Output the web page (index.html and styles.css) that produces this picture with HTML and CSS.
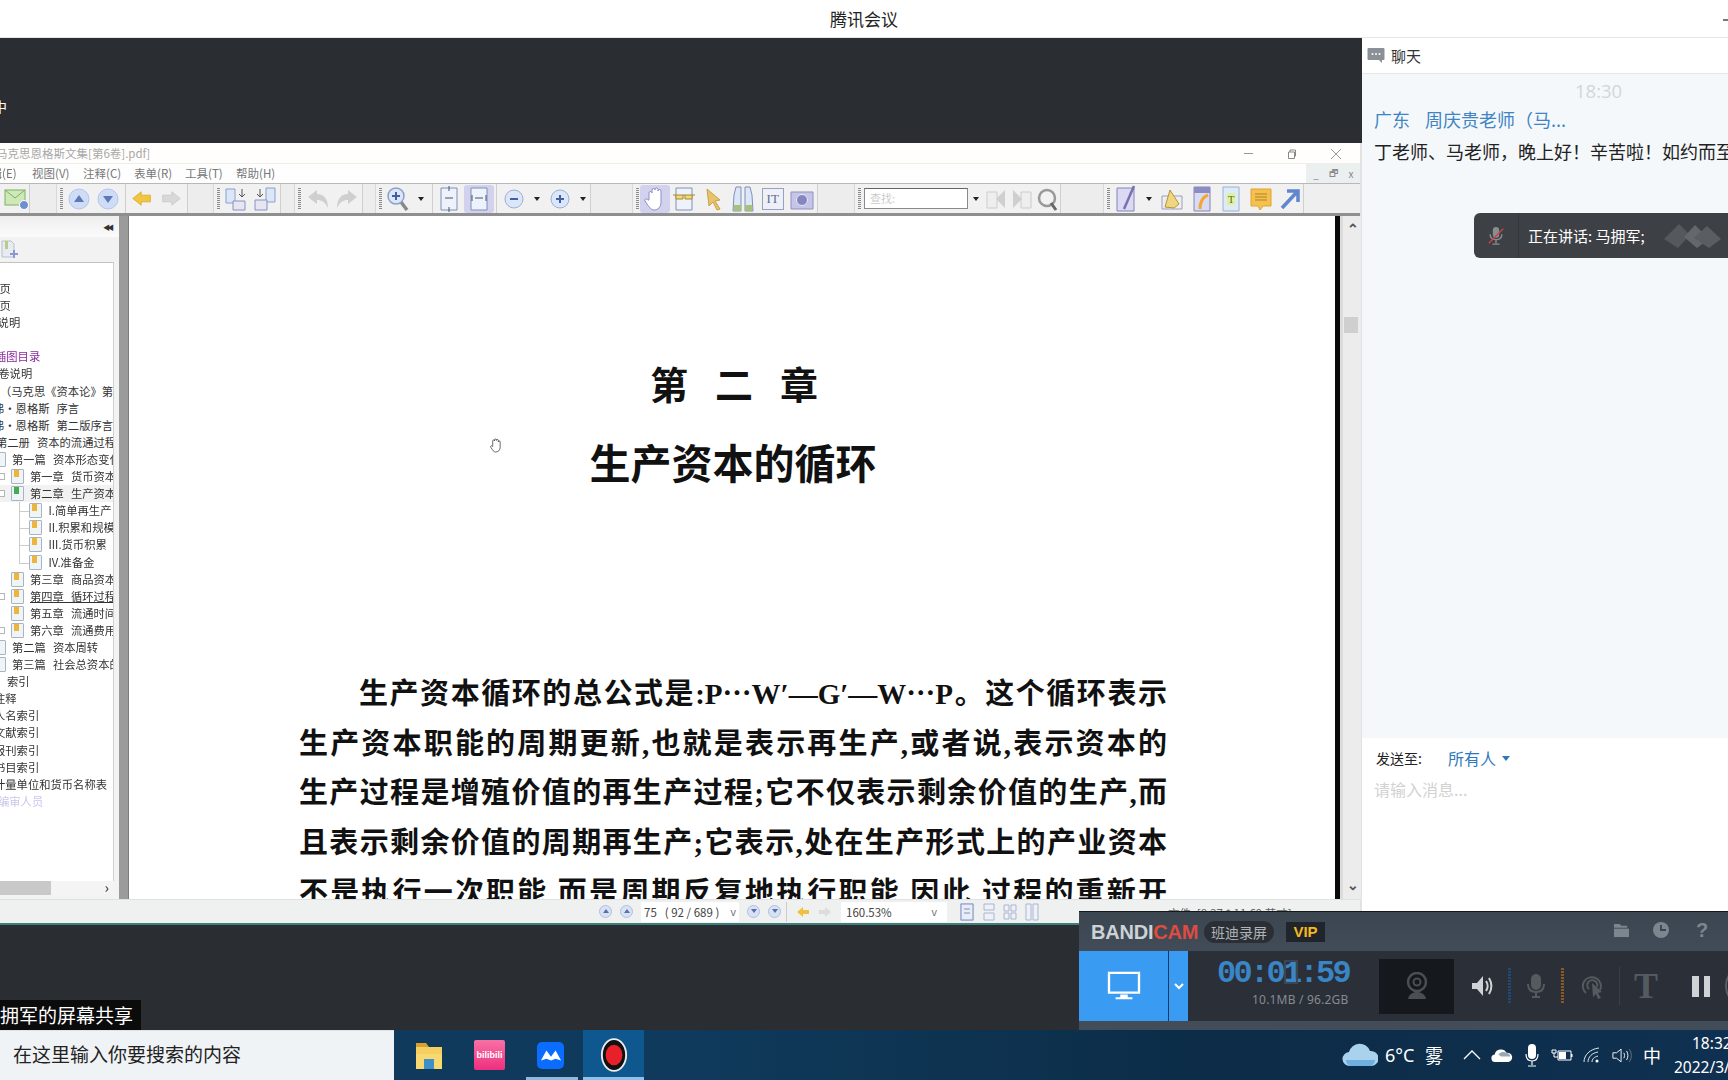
FILE: index.html
```html
<!DOCTYPE html>
<html lang="zh-CN">
<head>
<meta charset="utf-8">
<title>腾讯会议</title>
<link rel="stylesheet" href="styles.css">
</head>
<body>
<div class="app">
  <header class="titlebar"><span>腾讯会议</span><i class="win-min"></i></header>
  <div class="main">
    <section class="stage">
      <div class="stage-top"><span class="cut-char">中</span></div>
      <div class="pdf">
        <div class="pdf-title">
          <span class="pdf-name">马克思恩格斯文集[第6卷].pdf]</span>
          <span class="wc wc-min"></span>
          <svg class="wc wc-res" viewBox="0 0 10 10"><path d="M1.5 3h6v6.500h-6zM3 3V1h5.500v6H7.500" fill="none" stroke="#888"/></svg>
          <svg class="wc wc-close" viewBox="0 0 12 12"><path d="M1 1l10 10M11 1L1 11" stroke="#999"/></svg>
        </div>
        <div class="pdf-menu">
          <span class="m m-edit">编辑(E)</span><span class="m">视图(V)</span><span class="m">注释(C)</span><span class="m">表单(R)</span><span class="m">工具(T)</span><span class="m">帮助(H)</span>
          <span class="subctl"><b>_</b><b>🗗</b><b>x</b></span>
        </div>
        <div class="toolbar">
          <div class="tg w30 tg-cut">
            <span class="ti"><svg viewBox="0 0 26 24" width="26" height="24"><rect x="1" y="3" width="20" height="15" fill="#cfe8b8" stroke="#7fb060"/><path d="M1 3l10 8 10-8" fill="none" stroke="#7fb060"/><circle cx="20" cy="18" r="4.500" fill="#6f8fd0" stroke="#fff"/></svg></span>
          </div>
          <div class="sp w27"></div>
          <div class="tg w69">
            <i class="grip"></i>
            <span class="ti"><svg viewBox="0 0 24 24" width="24" height="24"><circle cx="12" cy="12" r="10" fill="#cfdcf6" stroke="#b5c6ea"/><path d="M7 15l5-7 5 7z" fill="#5f78b8"/></svg></span>
            <span class="ti"><svg viewBox="0 0 24 24" width="24" height="24"><circle cx="12" cy="12" r="10" fill="#cfdcf6" stroke="#b5c6ea"/><path d="M7 9l5 7 5-7z" fill="#5f78b8"/></svg></span>
          </div>
          <div class="tg w62 tg-tight">
            <span class="ti"><svg viewBox="0 0 24 20" width="20" height="17"><path d="M1 10l10-8v4h11v8H11v4z" fill="#f1c63e" stroke="#d9a92c"/></svg></span>
            <span class="ti"><svg viewBox="0 0 24 20" width="20" height="17"><path d="M23 10L13 2v4H2v8h11v4z" fill="#d8d8d8" stroke="#c8c8c8"/></svg></span>
          </div>
          <div class="sp w26"></div>
          <div class="tg w67">
            <i class="grip"></i>
            <span class="ti"><svg viewBox="0 0 26 26" width="26" height="26"><path d="M3 3h9v14H3z" fill="#dbe6f8" stroke="#8aa0c8"/><path d="M19 3v8M16 8l3 3 3-3" fill="none" stroke="#555"/><path d="M10 15h12v9H10z" fill="#e6e6f2" stroke="#8890c0"/></svg></span>
            <span class="ti"><svg viewBox="0 0 26 26" width="26" height="26"><path d="M14 2h9v14h-9z" fill="#dbe6f8" stroke="#8aa0c8"/><path d="M8 3v8M5 8l3 3 3-3" fill="none" stroke="#555"/><path d="M3 14h12v10H3z" fill="#e6e6f2" stroke="#8890c0"/></svg></span>
          </div>
          <div class="sp w14"></div>
          <div class="tg w68 tg-g4">
            <i class="grip"></i>
            <span class="ti"><svg viewBox="0 0 24 22" width="24" height="22"><path d="M2 9l9-7v4c7 0 11 5 11 14-3-6-6-8-11-8v4z" fill="#cfcfcf"/></svg></span>
            <span class="ti"><svg viewBox="0 0 24 22" width="24" height="22"><path d="M22 9l-9-7v4C6 6 2 11 2 20c3-6 6-8 11-8v4z" fill="#cfcfcf"/></svg></span>
          </div>
          <div class="sp w13"></div>
          <div class="tg w57">
            <i class="grip"></i>
            <span class="ti"><svg viewBox="0 0 24 26" width="24" height="26"><path d="M15 16l6 8" stroke="#888" stroke-width="3.500"/><circle cx="10" cy="10" r="8" fill="#dbe6f8" stroke="#8aa0c8" stroke-width="1.500"/><path d="M6 10h8M10 6v8" stroke="#3f5fa8" stroke-width="2"/></svg></span>
            <i class="drop"></i>
          </div>
          <div class="tg w64 tg-tight">
            <span class="ti ti30"><svg viewBox="0 0 20 28" width="20" height="28"><path d="M2 3h16v22H2z" fill="#eef2fb" stroke="#7f8fb8"/><path d="M10 1v5M10 22v5M6 13h8" stroke="#44526e"/></svg></span>
            <span class="ti ti30 ti-on"><svg viewBox="0 0 20 28" width="20" height="28"><path d="M2 3h16v22H2z" fill="#eef2fb" stroke="#7f8fb8"/><path d="M6 13h8M3 10v6M17 10v6" stroke="#44526e"/></svg></span>
          </div>
          <div class="tg w94 tg-g7">
            <span class="ti"><svg viewBox="0 0 22 22" width="22" height="22"><circle cx="11" cy="11" r="9" fill="#dbe6f8" stroke="#9aafd6"/><path d="M7 11h8" stroke="#3f5fa8" stroke-width="2"/></svg></span><i class="drop"></i>
            <span class="ti"><svg viewBox="0 0 22 22" width="22" height="22"><circle cx="11" cy="11" r="9" fill="#dbe6f8" stroke="#9aafd6"/><path d="M7 11h8M11 7v8" stroke="#3f5fa8" stroke-width="2"/></svg></span><i class="drop"></i>
          </div>
          <div class="sp w42"></div>
          <div class="tg w185">
            <i class="grip"></i>
            <span class="ti ti-on"><svg viewBox="0 0 22 24" width="22" height="24"><path d="M5 13V6a1.500 1.500 0 013 0V3a1.500 1.500 0 013 0v-.5a1.500 1.500 0 013 0V4a1.500 1.500 0 013 0v11c0 5-3 8-7 8-3 0-5-3-9-9-1-2 1-3 3-1z" fill="#fff" stroke="#8c90c8"/></svg></span>
            <span class="ti"><svg viewBox="0 0 24 26" width="24" height="26"><path d="M4 2h16v22H4z" fill="#eef2fb" stroke="#8090b8"/><path d="M1 9h22M4 9v4h7V9M13 9v4h7V9" fill="#f5d97a" stroke="#a5892f"/></svg></span>
            <span class="ti"><svg viewBox="0 0 22 24" width="22" height="24"><path d="M4 2l13 11-5 1 5 8-3 1-4-8-4 4z" fill="#e8c36a" stroke="#c7a24c"/></svg></span>
            <span class="ti"><svg viewBox="0 0 24 28" width="24" height="28"><path d="M3 10l2-8h5v24H2zM21 10l-2-8h-5v24h8z" fill="#dbe6f8" stroke="#7f8fb8"/><path d="M3 20h7v6H3zM14 20h7v6h-7z" fill="#a5c27a"/></svg></span>
            <span class="ti"><span class="it-box">IT</span></span>
            <span class="ti"><svg viewBox="0 0 24 22" width="24" height="22"><path d="M1 4h22v17H1z" fill="#c5c5e8" stroke="#8f8fc0"/><circle cx="12" cy="12" r="5.500" fill="#8585c0" stroke="#e8e8f8"/></svg></span>
          </div>
          <div class="sp w37"></div>
          <div class="tg w206">
            <i class="grip"></i>
            <span class="find">查找:</span><i class="drop drop-find"></i>
            <span class="ti ti-n"><svg viewBox="0 0 22 24" width="22" height="24"><path d="M2 5h10v16H2z" fill="#eee" stroke="#ccc"/><path d="M20 3v18l-9-9z" fill="#cfcfcf"/></svg></span>
            <span class="ti ti-n"><svg viewBox="0 0 22 24" width="22" height="24"><path d="M10 5h10v16H10z" fill="#eee" stroke="#ccc"/><path d="M2 3v18l9-9z" fill="#cfcfcf"/></svg></span>
            <span class="ti ti-n"><svg viewBox="0 0 22 26" width="22" height="26"><circle cx="11" cy="12" r="8" fill="#f2f2f2" stroke="#999" stroke-width="2.500"/><path d="M15 17l5 7" stroke="#666" stroke-width="3"/></svg></span>
          </div>
          <div class="sp w43"></div>
          <div class="tg w200">
            <i class="grip"></i>
            <span class="ti"><svg viewBox="0 0 24 28" width="24" height="28"><path d="M3 3h17v23H3z" fill="#dadaf2" stroke="#8484b8"/><path d="M20 1L10 24" stroke="#7a6fb0" stroke-width="2.500"/></svg></span><i class="drop"></i>
            <span class="ti"><svg viewBox="0 0 24 24" width="24" height="24"><path d="M2 9h20v13H2z" fill="#eee" stroke="#9aa0c0"/><path d="M5 20L10 3l9 14-5 4z" fill="#f0d680" stroke="#b0963a"/></svg></span>
            <span class="ti"><svg viewBox="0 0 20 28" width="20" height="28"><path d="M2 2h16v24H2z" fill="#dadaf2" stroke="#8484b8"/><path d="M2 2h16v6H2z" fill="#8c8cc4"/><path d="M8 24c0-8 3-12 8-14" fill="none" stroke="#f0a830" stroke-width="3"/></svg></span>
            <span class="ti"><svg viewBox="0 0 20 26" width="20" height="26"><path d="M2 1h16v24H2z" fill="#ddeaf8" stroke="#9ab0d0"/><path d="M6 7h8v12H6z" fill="#e2f09a"/><text x="10" y="17" font-size="11" text-anchor="middle" fill="#55701f" font-family="Liberation Serif">T</text></svg></span>
            <span class="ti"><svg viewBox="0 0 22 24" width="22" height="24"><path d="M1 2h20v17h-8l-3 4-2-4H1z" fill="#f4c04e" stroke="#e0a532"/><path d="M5 7h12M5 10h12M5 13h12" stroke="#b08324"/></svg></span>
            <span class="ti"><svg viewBox="0 0 20 22" width="20" height="22"><path d="M2 20L17 4M7 3h11v11" fill="none" stroke="#5f86cf" stroke-width="3.500"/></svg></span>
          </div>
        </div>
        <div class="pdf-body">
          <aside class="side">
            <div class="side-head"><span class="collapse">◀◀</span></div>
            <div class="side-tools"><svg viewBox="0 0 18 20" width="18" height="20"><path d="M1 1h9l3 3v13H1z" fill="#e8ecf2" stroke="#b9c0cc"/><path d="M4 1h3v8H4z" fill="#b8cc88"/><path d="M13 10v8M9 14h8" stroke="#8a9ad0" stroke-width="2"/></svg></div>
            <div class="tree">
              <div class="row"><span class="t off-23">书名页</span></div>
              <div class="row"><span class="t off-23">版权页</span></div>
              <div class="row"><span class="t off-25">出版说明</span></div>
              <div class="row"></div>
              <div class="row"><span class="t off-5 purple">插图目录</span></div>
              <div class="row"><span class="t off-13">本卷说明</span></div>
              <div class="row"><span class="t off0">（马克思《资本论》第二册</span></div>
              <div class="row"><span class="t off-7">弗·恩格斯 &nbsp;序言</span></div>
              <div class="row"><span class="t off-7">弗·恩格斯 &nbsp;第二版序言</span></div>
              <div class="row"><span class="t off-4">第二册 &nbsp;资本的流通过程</span></div>
              <div class="row"><i class="page l1-ic"></i><span class="t l1">第一篇 &nbsp;资本形态变化及其循环</span></div>
              <div class="row"><i class="exp"></i><i class="page bm"></i><span class="t l2">第一章 &nbsp;货币资本的循环</span></div>
              <div class="row row-on"><i class="exp"></i><i class="page bm green"></i><span class="t l2">第二章 &nbsp;生产资本的循环</span></div>
              <div class="row row-sub"><i class="page bm l3-ic"></i><span class="t l3">I.简单再生产</span></div>
              <div class="row row-sub"><i class="page bm l3-ic"></i><span class="t l3">II.积累和规模扩大</span></div>
              <div class="row row-sub"><i class="page bm l3-ic"></i><span class="t l3">III.货币积累</span></div>
              <div class="row row-sub row-last"><i class="page bm l3-ic"></i><span class="t l3">IV.准备金</span></div>
              <div class="row"><i class="page bm"></i><span class="t l2">第三章 &nbsp;商品资本的循环</span></div>
              <div class="row"><i class="exp"></i><i class="page bm"></i><span class="t l2 ul">第四章 &nbsp;循环过程的三个公式</span></div>
              <div class="row"><i class="page bm"></i><span class="t l2">第五章 &nbsp;流通时间</span></div>
              <div class="row"><i class="exp"></i><i class="page bm"></i><span class="t l2">第六章 &nbsp;流通费用</span></div>
              <div class="row"><i class="page l1-ic"></i><span class="t l1">第二篇 &nbsp;资本周转</span></div>
              <div class="row"><i class="page l1-ic"></i><span class="t l1">第三篇 &nbsp;社会总资本的再生产</span></div>
              <div class="row"><span class="t off7">索引</span></div>
              <div class="row"><span class="t off-6">注释</span></div>
              <div class="row"><span class="t off-6">人名索引</span></div>
              <div class="row"><span class="t off-6">文献索引</span></div>
              <div class="row"><span class="t off-6">报刊索引</span></div>
              <div class="row"><span class="t off-6">书目索引</span></div>
              <div class="row"><span class="t off-6">计量单位和货币名称表</span></div>
              <div class="row"><span class="t off-2 pale">编审人员</span></div>
            </div>
            <div class="hscroll"><i class="hthumb"></i><span class="harrow">›</span></div>
          </aside>
          <div class="divider"></div>
          <main class="page-view">
            <div class="doc">
              <h1 class="ch">第二章</h1>
              <h2 class="ch-title">生产资本的循环</h2>
              <p class="ln ln-first">生产资本循环的总公式是:P⋯W′—G′—W⋯P。这个循环表示</p>
              <p class="ln">生产资本职能的周期更新,也就是表示再生产,或者说,表示资本的</p>
              <p class="ln">生产过程是增殖价值的再生产过程;它不仅表示剩余价值的生产,而</p>
              <p class="ln">且表示剩余价值的周期再生产;它表示,处在生产形式上的产业资本</p>
              <p class="ln">不是执行一次职能,而是周期反复地执行职能,因此,过程的重新开</p>
            </div>
            <svg class="hand" viewBox="0 0 14 16" width="13" height="15"><path d="M4 8V3a1 1 0 012 0V2a1 1 0 012 0v.5a1 1 0 012 0V4a1 1 0 012 0v6c0 3-2 5-5 5-2 0-3-2-5-5-1-1.500 1-2.500 2-1z" fill="#fff" stroke="#333" stroke-width=".8"/></svg>
          </main>
          <div class="blackline"></div>
          <div class="vscroll"><span class="va">⌃</span><i class="vthumb"></i><span class="vb">⌄</span></div>
        </div>
        <div class="statusbar">
          <span class="sb-nav">
            <i class="dot dot-up"></i><i class="dot dot-up"></i>
            <span class="sb-input"><span>75</span><span class="sb-pg">( 92 / 689 )</span><span class="sb-ch">v</span></span>
            <i class="dot dot-down"></i><i class="dot dot-down"></i>
          </span>
          <i class="sb-sep"></i>
          <svg class="sb-arrow" viewBox="0 0 14 12" width="14" height="12"><path d="M1 6l6-5v3h6v4H7v3z" fill="#f0c040"/></svg>
          <svg class="sb-arrow" viewBox="0 0 14 12" width="14" height="12"><path d="M13 6L7 1v3H1v4h6v3z" fill="#dcdcdc"/></svg>
          <i class="sb-sep"></i>
          <span class="sb-zoom"><span>160.53%</span><span class="sb-ch">v</span></span>
          <span class="sb-views">
            <svg class="vw on" viewBox="0 0 14 18" width="14" height="18"><path d="M1 1h12v16H1zM4 6h6M4 10h6" fill="#e8edf8" stroke="#8090c0"/></svg>
            <svg class="vw" viewBox="0 0 14 18" width="14" height="18"><path d="M2 1h10v6H2zM2 10h10v7H2z" fill="#eef2f8" stroke="#aab4d0"/></svg>
            <svg class="vw" viewBox="0 0 14 18" width="14" height="18"><path d="M1 2h5v6H1zM8 2h5v6H8zM1 10h5v6H1zM8 10h5v6H8z" fill="#eef2f8" stroke="#aab4d0"/></svg>
            <svg class="vw" viewBox="0 0 14 18" width="14" height="18"><path d="M1 1h5v16H1zM8 1h5v16H8z" fill="#eef2f8" stroke="#aab4d0"/></svg>
          </span>
          <span class="sb-file">文件: [8.27 * 11.69 英寸]</span>
        </div>
      </div>
      <div class="share-tag"><span>马拥军的屏幕共享</span></div>
    </section>
    <aside class="chat">
      <div class="chat-head">
        <svg viewBox="0 0 18 18" width="18" height="18"><path d="M1.500 1h15a1 1 0 011 1v10a1 1 0 01-1 1H15v3l-3-3H1.500a1 1 0 01-1-1V2a1 1 0 011-1z" fill="#8b8f96"/><circle cx="5.500" cy="7" r="1" fill="#fff"/><circle cx="9" cy="7" r="1" fill="#fff"/><circle cx="12.500" cy="7" r="1" fill="#fff"/></svg>
        <span>聊天</span>
      </div>
      <div class="chat-body">
        <div class="chat-time">18:30</div>
        <div class="chat-name"><span>广东</span><span>周庆贵老师（马...</span></div>
        <div class="chat-msg">丁老师、马老师，晚上好！辛苦啦！如约而至，感谢！</div>
      </div>
      <div class="composer">
        <div class="send-row"><span class="send-l">发送至:</span><span class="send-v">所有人</span><i class="send-tri"></i></div>
        <div class="placeholder">请输入消息...</div>
      </div>
      <div class="toast">
        <svg class="toast-mic" viewBox="0 0 20 22" width="18" height="20"><rect x="6.500" y="1" width="7" height="12" rx="3.500" fill="#8a8d90"/><path d="M3.500 9c0 4 3 6 6.500 6s6.500-2 6.500-6M10 15v4M6 20h8" fill="none" stroke="#8a8d90" stroke-width="1.500"/><path d="M2 19L18 3" stroke="#c8434a" stroke-width="1.500"/></svg>
        <i class="toast-sep"></i>
        <span class="toast-text">正在讲话: 马拥军;</span>
        <svg class="toast-logo" viewBox="0 0 57 27" width="57" height="27"><path d="M0 17L15 2l11 11-12 13z" fill="#55595d"/><path d="M20 15L31 3l14 14-12 9z" fill="#64686c"/><path d="M30 16L43 4l14 13-12 9z" fill="#5a5e62"/></svg>
      </div>
    </aside>
  </div>
  <footer class="taskbar">
    <div class="search">在这里输入你要搜索的内容</div>
    <div class="apps">
      <div class="app-cell"><svg viewBox="0 0 28 30" width="28" height="30"><path d="M1 3h10l3 4H1z" fill="#d9a030"/><path d="M1 7h26v22H1z" fill="#f4cf5f"/><path d="M1 14h26v15H1z" fill="#f8d870"/><path d="M9 19h10v10H9z" fill="#3f8fc8"/></svg></div>
      <div class="app-cell"><div class="bili">bilibili</div></div>
      <div class="app-cell app-und"><div class="tm"><svg viewBox="0 0 24 14" width="22" height="14"><path d="M1 13L7 2l5 7 5-7 6 11-6-2-5 2-5-2z" fill="#fff"/></svg></div></div>
      <div class="app-cell app-act"><svg viewBox="0 0 30 36" width="28" height="34"><ellipse cx="15" cy="18" rx="13" ry="17" fill="#111" stroke="#eee" stroke-width="2"/><ellipse cx="15" cy="18" rx="9" ry="11" fill="#e8202a"/></svg></div>
    </div>
    <div class="tray">
      <svg class="tray-cloud" viewBox="0 0 36 26" width="36" height="26"><path d="M8 24a7 7 0 01-1-14A11 11 0 0128 9a7.500 7.500 0 012 15z" fill="#a9d2ee"/><path d="M4 18h29a7 7 0 01-4 6H8a7 7 0 01-4-6z" fill="#6fb0de"/></svg>
      <span class="temp">6°C</span><span class="fog">雾</span>
      <span class="tr"><svg viewBox="0 0 18 12" width="18" height="12"><path d="M1 10l8-8 8 8" fill="none" stroke="#fff" stroke-width="1.300"/></svg></span>
      <span class="tr"><svg viewBox="0 0 24 16" width="22" height="15"><path d="M5 15a4 4 0 01-1-8 7 7 0 0113-2 5 5 0 012 10z" fill="#fff"/><path d="M8 7a7 7 0 019-2 5 5 0 014 4H11z" fill="#9aa8b4"/></svg></span>
      <span class="tr"><svg viewBox="0 0 16 24" width="16" height="24"><rect x="4" y="1" width="8" height="15" rx="4" fill="#fff"/><path d="M2 11c0 4 2 7 6 7s6-3 6-7M8 18v4M4 23h8" fill="none" stroke="#fff" stroke-width="1.200"/></svg></span>
      <span class="tr"><svg viewBox="0 0 22 14" width="22" height="14"><path d="M7 3h13v9H7z" fill="none" stroke="#fff"/><path d="M8 4h7v7H8z" fill="#fff"/><path d="M20 6h1.500v3H20z" fill="#fff"/><path d="M1 2h4v3H1zM3 5v4h4" fill="none" stroke="#fff"/></svg></span>
      <span class="tr"><svg viewBox="0 0 20 18" width="20" height="18"><path d="M2 16C2 9 8 3 17 2M6 16c0-5 4-9 10-10M10 16c0-3 2-5 6-6" fill="none" stroke="#dfe6ec"/><circle cx="15" cy="15" r="1.500" fill="#fff"/></svg></span>
      <span class="tr"><svg viewBox="0 0 22 18" width="20" height="17"><path d="M1 6h4l5-4v14l-5-4H1z" fill="none" stroke="#fff"/><path d="M13 6c1 2 1 4 0 6M16 4c2 3 2 7 0 10" fill="none" stroke="#fff"/><path d="M19 2c3 4 3 10 0 14" fill="none" stroke="#667a8a"/></svg></span>
      <span class="tr zh">中</span>
      <div class="clock"><div class="clock-t">18:32</div><div class="clock-d">2022/3/13</div></div>
    </div>
  </footer>
  <section class="bandi">
    <div class="bd-head">
      <span class="bd-logo">BANDI<em>CAM</em></span>
      <span class="bd-pill">班迪录屏</span>
      <span class="bd-vip">VIP</span>
      <span class="bd-tools">
        <svg viewBox="0 0 18 16" width="17" height="15"><path d="M1 1h6l2 2h6v2H1z" fill="#7d858e"/><path d="M1 6h16v9H1z" fill="#7d858e"/></svg>
        <svg viewBox="0 0 16 16" width="16" height="16"><circle cx="8" cy="8" r="8" fill="#7d858e"/><path d="M8 3v5h5" fill="none" stroke="#3a4552" stroke-width="1.800"/></svg>
        <span class="bd-q">?</span>
      </span>
    </div>
    <div class="bd-row">
      <div class="bd-blue"><svg viewBox="0 0 36 32" width="34" height="30"><path d="M2 2h32v21H2z" fill="none" stroke="#fff" stroke-width="2.500"/><path d="M14 25h8v3h5v2H9v-2h5z" fill="#fff"/></svg></div>
      <div class="bd-chev"><svg viewBox="0 0 10 8" width="10" height="8"><path d="M1 2l4 4 4-4" fill="none" stroke="#fff" stroke-width="2"/></svg></div>
      <div class="bd-time"><div class="bd-clock">00:0<span class="bd-ghost">1</span>:59</div><div class="bd-size">10.1MB / 96.2GB</div></div>
      <div class="bd-cam"><svg viewBox="0 0 24 28" width="24" height="28"><circle cx="12" cy="10" r="9" fill="none" stroke="#4a4f54" stroke-width="2.500"/><circle cx="12" cy="10" r="3.500" fill="none" stroke="#4a4f54" stroke-width="2"/><path d="M3 27c1-5 5-7 9-7s8 2 9 7z" fill="#4a4f54"/></svg></div>
      <div class="bd-ic"><svg viewBox="0 0 24 24" width="24" height="24"><path d="M1 9h5l6-7v20l-6-7H1z" fill="#cfd3d6"/><path d="M15 7c2 3 2 7 0 10M18 4c3 5 3 11 0 16" fill="none" stroke="#cfd3d6" stroke-width="2"/></svg></div>
      <i class="bd-meter bd-m-blue"></i>
      <div class="bd-ic"><svg viewBox="0 0 20 26" width="20" height="26"><rect x="5" y="1" width="10" height="16" rx="5" fill="#555a5f"/><path d="M2 11c0 5 3 8 8 8s8-3 8-8M10 19v4M6 24h8" fill="none" stroke="#555a5f" stroke-width="2"/></svg></div>
      <i class="bd-meter bd-m-orange"></i>
      <div class="bd-ic bd-cur"><svg viewBox="0 0 22 26" width="22" height="26"><path d="M4 20a9 9 0 1114-3M7 16a5 5 0 118-2" fill="none" stroke="#555a5f" stroke-width="2"/><path d="M10 10l10 9-4 1 3 5-3 1-2-5-3 3z" fill="#555a5f"/></svg></div>
      <i class="bd-sep"></i>
      <span class="bd-t">T</span>
      <div class="bd-pause"><i></i><i></i></div>
      <i class="bd-ring"></i>
    </div>
    <div class="bd-foot"></div>
  </section>
</div>
</body>
</html>
```
FILE: styles.css
```css
*{box-sizing:border-box}
html,body{margin:0;padding:0;background:#2a2e33}
body{font-family:"Noto Sans CJK SC","Noto Sans",sans-serif}
i{font-style:normal;display:block}
.app{position:relative;width:1728px;height:1080px;overflow:hidden;display:flex;flex-direction:column}

.titlebar{height:38px;flex:none;background:#fff;border-bottom:1px solid #e6e6e6;display:flex;align-items:center;justify-content:center;font-size:17px;color:#222;position:relative}
.win-min{position:absolute;right:0;top:19px;width:5px;height:2px;background:#777}

.main{flex:1;display:flex;min-height:0}
.stage{width:1362px;flex:none;background:#2a2e33;display:flex;flex-direction:column;position:relative}
.stage-top{height:105px;flex:none;position:relative;overflow:hidden;display:flex;align-items:flex-end;padding-bottom:27px}
.cut-char{color:#fff;font-size:14px;line-height:20px;margin-left:-7px}

.pdf{width:1362px;height:782px;flex:none;background:#fff;border-right:2px solid #e2e2e2;display:flex;flex-direction:column;filter:blur(.45px)}
.pdf-title{height:21px;flex:none;background:#fffefd;border-bottom:1px solid #f0eee8;position:relative;display:flex;align-items:center;overflow:hidden}
.pdf-name{font-size:11.5px;color:#a8a8a8;margin-left:-4px;white-space:nowrap}
.wc{position:absolute}
.wc-min{left:1244px;top:10px;width:9px;height:1px;background:#999}
.wc-res{left:1287px;top:6px;width:10px;height:10px}
.wc-close{left:1330px;top:5px;width:12px;height:12px}
.pdf-menu{height:19px;flex:none;background:#fefefe;display:flex;align-items:center;padding:0 0 2px 32px;position:relative;font-size:11.5px;color:#777}
.m{white-space:nowrap;width:51px;flex:none}
.m-edit{position:absolute;left:-21px}
.subctl{position:absolute;left:1306px;top:0;width:54px;height:19px;background:#eceff0;display:flex;justify-content:space-between;align-items:center;padding:0 3px 0 4px;color:#888;font-size:10px}
.subctl b{font-weight:400;width:12px;text-align:center}

.toolbar{height:33px;flex:none;background:#efefef;border-top:1px solid #b8b8b8;border-bottom:3px solid #8f8f8f;display:flex;overflow:hidden}
.tg{flex:none;height:100%;display:flex;align-items:center;background:#f1f1f1;border-right:1px solid #cfcfcf;padding-left:3px}
.sp{flex:none;height:100%;background:#ededed;border-right:1px solid #d8d8d8}
.tg-cut{padding-left:2px}
.tg-tight{padding-left:1px}
.tg-g7{padding-left:2px}
.tg-g4 .grip{margin-right:2px}
.w13{width:13px}.w14{width:14px}.w26{width:26px}.w27{width:27px}.w30{width:30px}.w37{width:37px}.w42{width:42px}.w43{width:43px}
.w57{width:57px}.w62{width:62px}.w64{width:64px}.w67{width:67px}.w68{width:68px}.w69{width:69px}.w94{width:94px}.w185{width:185px}.w200{width:200px}.w206{width:206px}
.grip{width:3px;height:22px;margin-right:1px;flex:none;background:repeating-linear-gradient(to bottom,#8a8a8a 0 1px,transparent 1px 2px)}
.ti{flex:none;width:29.5px;height:28px;display:flex;align-items:center;justify-content:center}
.ti svg{display:block}
.ti30{width:30px}
.ti-n{width:25.7px}
.ti-on{background:#d2d2ef;border-radius:3px}
.drop{flex:none;width:17px;height:6px;position:relative}
.drop::after{content:"";position:absolute;left:5px;top:1px;border-left:3.500px solid transparent;border-right:3.500px solid transparent;border-top:4px solid #222}
.drop-find{width:15px}
.it-box{width:22px;height:22px;border:1px solid #9aa0c0;background:#eef0f8;color:#606a90;font:13px/20px "Liberation Serif",serif;text-align:center}
.find{flex:none;margin-left:2px;width:104px;height:21px;background:#fff;border:1px solid #8a8a8a;border-top-color:#666;color:#ccc;font-size:11px;line-height:19px;padding-left:5px}

.pdf-body{flex:1;min-height:0;display:flex;position:relative}
.side{width:119px;flex:none;background:#f3f3f3;display:flex;flex-direction:column;overflow:hidden;position:relative}
.side-head{height:21px;flex:none;background:linear-gradient(#eee,#fbfbfb);display:flex;justify-content:flex-end;align-items:center;padding-right:5px}
.collapse{font-size:7px;letter-spacing:-3px;color:#333;padding-right:3px}
.side-tools{height:25px;flex:none;display:flex;align-items:center;padding-left:1px;background:#f2f2f2}
.tree{flex:1;margin-right:5px;background:#fff;border-top:1px solid #c2c2c2;border-right:1px solid #d0d0d0;padding-top:17px;overflow:hidden;min-height:0}
.row{height:17.1px;display:flex;align-items:center;position:relative;white-space:nowrap;font-size:11.3px;color:#333;overflow:hidden}
.row-on{background:#f2f2f2}
.t{position:absolute;line-height:17px;top:0;word-spacing:1px}
.off-23{left:-23px}.off-25{left:-25px}.off-5{left:-5px}.off-13{left:-13px}.off0{left:0}.off-7{left:-7px}.off-4{left:-4px}.off7{left:7px}.off-6{left:-6px}.off-2{left:-2px}
.purple{color:#8d2a9e}
.pale{color:#c8c6ee}
.l1{left:12px}.l2{left:30px}.l3{left:48.500px}
.ul{text-decoration:underline}
.page{position:absolute;top:1px;left:11px;width:13px;height:15px;background:#eef4f8;border:1px solid #aab4be;border-radius:1px}
.l1-ic{left:-7px}
.l3-ic{left:29px}
.bm::after{content:"";position:absolute;left:2px;top:0;width:5px;height:7px;background:#eeb53a}
.green::after{background:#3fae4e}
.row-sub::before{content:"";position:absolute;left:19px;top:0;width:10px;height:100%;border-left:1px solid #ccc}
.row-sub::after{content:"";position:absolute;left:19px;top:9px;width:10px;height:1px;background:#ccc}
.row-last::before{height:9px}
.exp{position:absolute;left:0;top:5px;width:5px;height:7px;border:1px solid #b5b5b5;border-left:0;background:#fff}
.hscroll{height:14px;flex:none;margin:0 5px 4px 0;background:#f4f4f4;position:relative}
.hthumb{position:absolute;left:0;top:0;width:51px;height:14px;background:#c9c9c9}
.harrow{position:absolute;right:5px;top:-3px;font-size:14px;line-height:18px;color:#555;font-weight:700}
.divider{width:10px;flex:none;background:#9b9b9b;border-right:1px solid #7c7c7c}
.page-view{width:1206px;flex:none;background:#fff;overflow:hidden;position:relative}
.doc{width:868px;margin-left:170px;padding-top:145px;font-family:"Liberation Serif","Noto Sans CJK SC",serif;color:#111}
.ch{margin:0;font-size:38px;line-height:50px;font-weight:700;letter-spacing:27px;text-align:center;padding-left:29px;white-space:nowrap}
.ch-title{margin:29px 0 0;font-size:41px;line-height:50px;font-weight:700;text-align:center;white-space:nowrap}
.ln{margin:0;font-size:29px;line-height:49.700px;font-weight:700;text-align:justify;text-align-last:justify;height:49.700px;overflow:hidden}
.ln-first{margin-top:180px;padding-left:60px}
.hand{position:absolute;left:360px;top:222px}
.blackline{width:5px;flex:none;background:#0a0a0a}
.vscroll{flex:none;width:21px;background:#ececec;position:relative;border-left:3px solid #dcdcdc}
.va,.vb{position:absolute;left:3px;width:14px;text-align:center;color:#555;font-size:14px;line-height:14px;font-weight:700}
.va{top:5px}.vb{bottom:8px}
.vthumb{position:absolute;left:1px;top:101px;width:14px;height:16px;background:#cfcfcf}

.statusbar{height:26px;flex:none;background:#eff1f1;border-top:1px solid #dfe2e2;border-bottom:2px solid #3d8079;display:flex;align-items:center;position:relative;padding-left:599px;font-size:11.500px;color:#444;white-space:nowrap;overflow:hidden}
.sb-nav{display:flex;align-items:center;gap:8px}
.dot{width:13px;height:13px;border-radius:50%;background:#d8e2f4;border:1px solid #aebfe0;flex:none;position:relative}
.dot::after{content:"";position:absolute;left:2.500px;border-left:3px solid transparent;border-right:3px solid transparent}
.dot-up::after{top:3px;border-bottom:4px solid #5a6fa8}
.dot-down::after{top:3px;border-top:4px solid #5a6fa8}
.sb-input{display:flex;align-items:center;background:#fff;width:98px;height:20px;padding:0 3px 0 3px;gap:8px}
.sb-ch{color:#777;font-family:"Liberation Sans",sans-serif;font-size:11px;margin-left:auto}
.sb-sep{width:1px;height:20px;background:#ccc;margin:0 5px;flex:none}
.sb-arrow{flex:none;margin:0 4px}
.sb-zoom{width:106px;height:20px;background:#fff;display:flex;align-items:center;padding:0 10px 0 5px;margin-left:-6px}
.sb-views{display:flex;gap:7.500px;margin-left:13px}
.vw{display:block}
.vw.on{background:#d2d8ef}
.sb-file{position:absolute;left:1168px;top:5px;color:#666}

.share-tag{position:absolute;left:0;bottom:0;width:141px;height:30px;background:#0b0b0b;color:#fff;font-size:19px;line-height:30px;overflow:hidden;white-space:nowrap}
.share-tag span{display:block;margin-left:-19px}

.chat{flex:1;background:#fff;display:flex;flex-direction:column;position:relative;overflow:hidden}
.chat-head{height:36px;flex:none;background:#fff;border-bottom:1px solid #e4e6e8;display:flex;align-items:center;padding-left:5px;gap:6px;font-size:15px;color:#333}
.chat-body{height:664px;flex:none;background:#f5f8fa;padding-left:12px;white-space:nowrap;overflow:hidden}
.chat-time{margin:6px 0 0 201px;color:#d2d6d9;font-size:18.500px;line-height:22px;font-family:"Open Sans",sans-serif}
.chat-name{margin-top:4px;display:flex;gap:15px;font-size:18px;line-height:26px;color:#3f85c5}
.chat-msg{margin-top:5px;font-size:18px;line-height:28px;color:#222}
.composer{flex:1;background:#fff;padding:9px 0 0 12px;display:flex;flex-direction:column}
.send-row{display:flex;align-items:center;height:22px}
.send-l{font-size:14px;color:#222;margin-left:2px;width:72px}
.send-v{font-size:16px;color:#2e78bd}
.send-tri{margin-left:6px;border-left:4px solid transparent;border-right:4px solid transparent;border-top:5px solid #2e78bd}
.placeholder{margin-top:8px;font-size:16px;line-height:24px;color:#d2d2d2}
.toast{position:absolute;left:112px;top:175px;width:300px;height:45px;background:#3d4145;border-radius:6px;display:flex;align-items:center;padding-left:13px;color:#fff;font-size:15px;white-space:nowrap}
.toast-sep{width:1px;height:45px;background:#34373a;margin:0 9px 0 13px;flex:none}
.toast-logo{margin-left:19px;flex:none}

.taskbar{height:50px;flex:none;background:linear-gradient(90deg,#0f3a5b 0,#0f3a5b 40%,#0c2c47 70%,#0f3050 100%);display:flex;color:#fff;overflow:hidden}
.search{width:394px;flex:none;background:#f0f3f5;color:#222;font-size:19px;line-height:46px;padding-left:13px;border-top:1px solid #dfe3e6}
.apps{flex:none;display:flex;padding-left:4px;width:948px}
.app-cell{width:61px;height:50px;flex:none;display:flex;align-items:center;justify-content:center;position:relative}
.bili{width:31px;height:30px;background:linear-gradient(#f771a5,#ee2f7e);color:#fff;font-size:9px;line-height:30px;text-align:center;border-radius:2px;font-family:"Liberation Sans",sans-serif;font-weight:700}
.tm{width:27px;height:27px;background:#0a6dff;border-radius:5px;display:flex;align-items:center;justify-content:center}
.app-und::after{content:"";position:absolute;left:6px;right:3px;bottom:0;height:3px;background:#8dbbdd}
.app-act{background:#0e588f;margin-left:2px}
.app-act::after{content:"";position:absolute;left:0;right:0;bottom:0;height:3px;background:#8dc3ea}
.tray{flex:none;display:flex;align-items:center}
.tray-cloud{flex:none}
.temp{margin-left:7px;font-size:18px;width:40px;font-family:"Noto Sans",sans-serif}
.fog{font-size:18px;width:32px}
.tr{width:30px;flex:none;display:flex;align-items:center;justify-content:center}
.zh{font-size:18px}
.clock{margin-left:7px;width:92px;font-size:15.500px;font-family:"Noto Sans",sans-serif;line-height:24px;white-space:nowrap;flex:none}
.clock-t{padding-left:18px}

.bandi{position:absolute;left:1079px;top:911px;width:649px;height:119px;background:#3e4853;border-top:1px solid #14181c;display:flex;flex-direction:column;color:#aab}
.bd-head{height:39px;flex:none;background:linear-gradient(#3c4651,#414c58);display:flex;align-items:center;padding-left:12px;position:relative}
.bd-logo{font:700 20px/1 "Liberation Sans",sans-serif;color:#cdd2d6;letter-spacing:-.2px;width:113px;flex:none}
.bd-logo em{font-style:normal;color:#df4b41}
.bd-pill{flex:none;background:#2b2f35;color:#aeb3b8;font-size:14px;line-height:22px;width:70px;text-align:center;border-radius:11px}
.bd-vip{flex:none;margin-left:12px;width:39px;height:20px;background:#20252b;color:#f5b820;font:700 15px/20px "Liberation Sans",sans-serif;text-align:center}
.bd-tools{position:absolute;left:534px;top:8px;display:flex;align-items:center;gap:23px;color:#7d858e}
.bd-q{font:700 20px/1 "Liberation Sans",sans-serif;margin-left:4px}
.bd-row{height:70px;flex:none;background:#2b2f38;display:flex;align-items:center;position:relative;overflow:hidden}
.bd-blue{width:90px;height:100%;flex:none;background:#3a9bf2;border-right:1px solid #0f3b66;display:flex;align-items:center;justify-content:center}
.bd-chev{width:19px;height:100%;flex:none;background:#3a9bf2;display:flex;align-items:center;justify-content:center}
.bd-time{width:191px;flex:none;padding-left:29px}
.bd-clock{font:700 32px/30px "Liberation Mono",monospace;color:#3a85c5;letter-spacing:-2.700px;margin-top:-5px;width:135px;white-space:nowrap}
.bd-ghost{position:relative}
.bd-ghost::before{content:"";position:absolute;left:1px;top:5px;width:10px;height:20px;border:2px solid #3b4654;z-index:0}
.bd-size{font:12px/18px "Noto Sans",sans-serif;color:#858b92;margin-left:35px;margin-top:2px;white-space:nowrap;letter-spacing:.2px}
.bd-cam{width:75px;height:55px;flex:none;background:#15191d;display:flex;align-items:center;justify-content:center;margin-right:14px}
.bd-ic{width:30px;flex:none;display:flex;justify-content:center}
.bd-cur{margin-left:4px}
.bd-meter{width:3px;height:36px;flex:none;margin:0 10px;background:repeating-linear-gradient(to bottom,currentColor 0 2px,transparent 2px 3px);opacity:.8}
.bd-m-blue{color:#1d4f86}
.bd-m-orange{color:#a3621e}
.bd-sep{width:1px;height:38px;background:#3a3f46;flex:none;margin-left:11px}
.bd-t{flex:none;font:700 36px/1 "Liberation Serif",serif;color:#555a5f;margin-left:14px;width:58px}
.bd-pause{display:flex;gap:5px;flex:none}
.bd-pause i{width:6.500px;height:21px;background:#cfd3d6}
.bd-ring{position:absolute;left:646px;top:13px;width:44px;height:44px;border:2px solid #5a5f65;border-radius:50%}
.bd-foot{flex:1;background:#434d59}
```
